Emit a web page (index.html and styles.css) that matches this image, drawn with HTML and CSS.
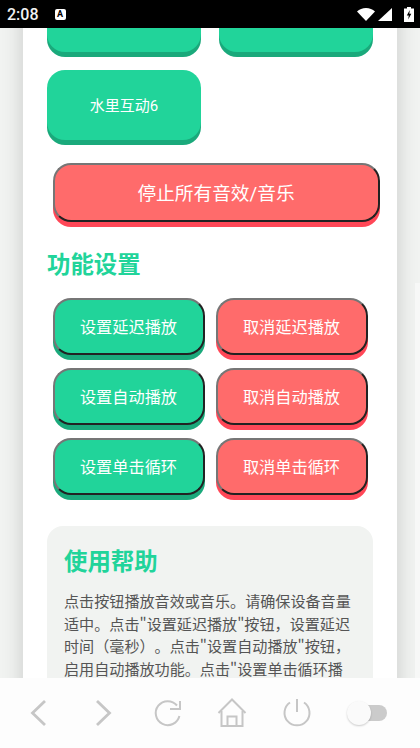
FILE: index.html
```html
<!DOCTYPE html>
<html lang="zh-CN">
<head>
    <meta charset="UTF-8">
    <meta name="viewport" content="width=device-width, initial-scale=1.0">
    <title>音效</title>
    <link rel="stylesheet" href="styles.css">
</head>
<body>
    <div class="status-bar">
        <span class="time">2:08</span>
        <span class="notify-icon">A</span>
        <span class="status-icons">
            <svg class="wifi" width="18" height="13" viewBox="0 0 18 13"><path d="M0 3.600C2.400 1.400 5.500 0 9 0s6.600 1.400 9 3.600L9 13z" fill="#fff"/></svg>
            <svg class="signal" width="14" height="13" viewBox="0 0 14 13"><path d="M14 0v13H0z" fill="#fff"/></svg>
            <svg class="battery" width="10" height="15" viewBox="0 0 10 15"><path d="M3 0h4v1.500h3V15H0V1.500h3z" fill="#fff"/><path d="M5.800 3 2.800 8.500h2L4.200 12.500 7.300 6.800h-2z" fill="#000"/></svg>
        </span>
    </div>

    <div class="viewport">
        <div class="card">
            <div class="sound-grid">
                <button class="sound-btn"></button>
                <button class="sound-btn"></button>
                <button class="sound-btn">水里互动6</button>
            </div>

            <button class="btn btn-red btn-stop">停止所有音效/音乐</button>

            <h2 class="section-title">功能设置</h2>
            <div class="settings-grid">
                <button class="btn btn-green">设置延迟播放</button>
                <button class="btn btn-red">取消延迟播放</button>
                <button class="btn btn-green">设置自动播放</button>
                <button class="btn btn-red">取消自动播放</button>
                <button class="btn btn-green">设置单击循环</button>
                <button class="btn btn-red">取消单击循环</button>
            </div>

            <div class="help">
                <h2 class="section-title">使用帮助</h2>
                <p>点击按钮播放音效或音乐。请确保设备音量适中。点击"设置延迟播放"按钮，设置延迟时间（毫秒）。点击"设置自动播放"按钮，启用自动播放功能。点击"设置单击循环播</p>
            </div>
        </div>
        <div class="edge-panel"></div>
    </div>

    <div class="bottom-bar">
        <svg class="nav-icons" width="420" height="70" viewBox="0 0 420 70" fill="none" stroke="#c6c6c6" stroke-width="2">
            <path d="M45 23 32.500 35 45 47" stroke-width="2.800"/>
            <path d="M97 23 109.500 35 97 47" stroke-width="2.800"/>
            <path d="M177 27.500A12 12 0 1 0 179.400 38"/>
            <path d="M180 23v8h-10"/>
            <path d="M218.500 35 232 21.500 245.500 35"/>
            <path d="M221.500 33v15h21V33"/>
            <path d="M227.500 48V38.500h9V48"/>
            <path d="M290 24.500a12.500 12.500 0 1 0 14 0"/>
            <path d="M297 21v13"/>
        </svg>
        <span class="toggle"><span class="toggle-knob"></span></span>
    </div>
</body>
</html>
```

FILE: styles.css
```css
* {
    box-sizing: border-box;
}
body {
    font-family: Roboto, "Noto Sans CJK SC", sans-serif;
    display: flex;
    flex-direction: column;
    height: 100vh;
    margin: 0;
    overflow: hidden;
    background: #f1f3f1;
}
.status-bar {
    display: flex;
    align-items: center;
    flex: none;
    height: 28px;
    padding: 0 6px 0 7px;
    background: #000;
    color: #f2f2f2;
}
.time {
    font-size: 16px;
    font-weight: 500;
}
.notify-icon {
    width: 11px;
    height: 11px;
    margin-left: 16px;
    border-radius: 2px;
    background: #fff;
    color: #000;
    font-size: 9px;
    font-weight: 700;
    line-height: 11px;
    text-align: center;
}
.status-icons {
    display: flex;
    align-items: center;
    gap: 3px;
    margin-left: auto;
}
.battery {
    margin-left: 9px;
}
.viewport {
    position: relative;
    flex: 1;
    min-height: 0;
    overflow: hidden;
}
.card {
    width: 374px;
    margin: -46px auto 0;
    padding: 0 24px;
    background: #fff;
    box-shadow: 0 0 20px rgba(0, 0, 0, 0.17);
}
.edge-panel {
    position: absolute;
    top: 255px;
    right: 0;
    bottom: 0;
    width: 5px;
    background: #f7f8f7;
}
.sound-grid {
    display: grid;
    grid-template-columns: 154px 154px;
    gap: 18px;
}
.sound-btn {
    height: 70px;
    padding: 0 0 2px;
    border: none;
    border-radius: 18px;
    background: #21d49a;
    box-shadow: 0 5px 0 #1aa97b;
    color: #fff;
    font-family: inherit;
    font-size: 15px;
}
.btn {
    height: 57px;
    padding: 0 1px 2px 0;
    border: 2px solid;
    border-color: #767676 #222 #222 #767676;
    border-radius: 18px;
    color: #fff;
    font-family: inherit;
    font-size: 16.200px;
}
.btn-green {
    background: #21d49a;
    box-shadow: 0 5px 0 #1aa97b;
}
.btn-red {
    background: #ff6b6b;
    box-shadow: 0 5px 0 #ff4757;
}
.btn-stop {
    display: block;
    width: 327px;
    height: 59px;
    margin: 23px 0 0 6px;
    font-size: 18.700px;
}
.section-title {
    margin: 0;
    color: #21d49a;
    font-size: 23.400px;
    font-weight: 700;
    line-height: 32px;
}
.card > .section-title {
    margin: 27px 0 0;
}
.settings-grid {
    display: grid;
    grid-template-columns: 152px 152px;
    gap: 13px 11px;
    margin: 17px 0 0 6px;
}
.help {
    margin-top: 31px;
    padding: 20px 17px 24px;
    border-radius: 16px;
    background: #f1f3f1;
}
.help p {
    margin: 11px 0 0;
    color: #555;
    font-family: "Noto Sans CJK SC", sans-serif;
    font-size: 15.100px;
    line-height: 22.700px;
    text-spacing-trim: space-all;
}
.bottom-bar {
    position: relative;
    flex: none;
    height: 70px;
    background: #fdfdfd;
}
.nav-icons {
    display: block;
}
.toggle {
    position: absolute;
    top: 27px;
    left: 350px;
    width: 37px;
    height: 16px;
    border-radius: 8px;
    background: #cbcbcb;
}
.toggle-knob {
    position: absolute;
    top: -4px;
    left: -3px;
    width: 24px;
    height: 24px;
    border-radius: 50%;
    background: #fafafa;
    box-shadow: 0 1px 2px rgba(0, 0, 0, 0.2);
}
```
